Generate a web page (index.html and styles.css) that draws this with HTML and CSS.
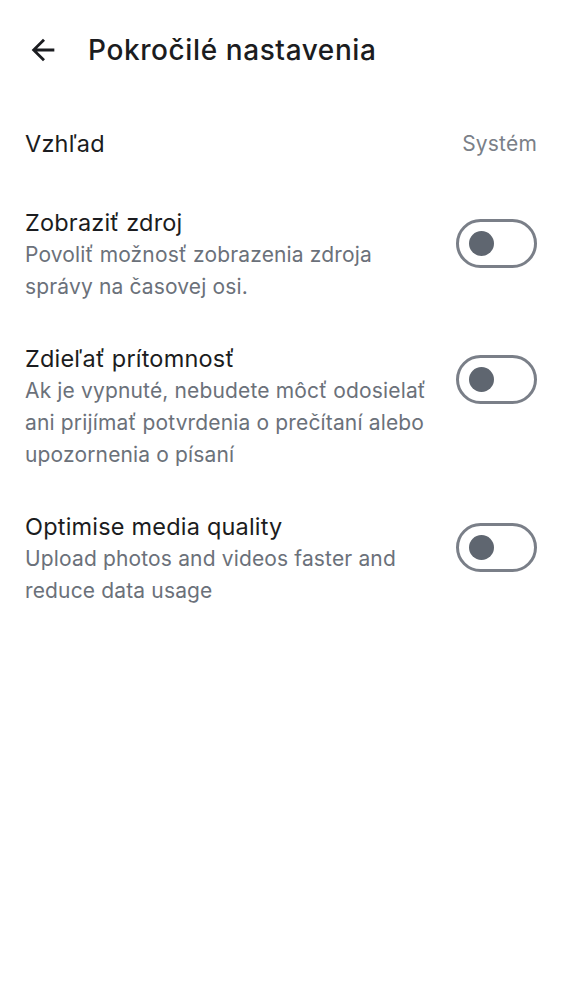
FILE: index.html
```
<!DOCTYPE html>
<html lang="sk">
<head>
<meta charset="utf-8">
<link rel="stylesheet" href="styles.css">
</head>
<body>
<div class="screen">
  <header class="appbar">
    <button class="back" aria-label="Späť">
      <svg width="34" height="34" viewBox="0 0 24 24"><path d="M20 11H7.83l5.59-5.59L12 4l-8 8 8 8 1.41-1.41L7.83 13H20v-2z" fill="#1b1c20"/></svg>
    </button>
    <h1 class="title">Pokročilé nastavenia</h1>
  </header>
  <main class="list">
    <div class="row row-simple">
      <div class="row-title">Vzhľad</div>
      <div class="row-value">Systém</div>
    </div>
    <div class="row">
      <div class="row-text">
        <div class="row-title">Zobraziť zdroj</div>
        <div class="row-sub">Povoliť možnosť zobrazenia zdroja správy na časovej osi.</div>
      </div>
      <div class="switch"><span class="knob"></span></div>
    </div>
    <div class="row">
      <div class="row-text">
        <div class="row-title">Zdieľať prítomnosť</div>
        <div class="row-sub">Ak je vypnuté, nebudete môcť odosielať ani prijímať potvrdenia o prečítaní alebo upozornenia o písaní</div>
      </div>
      <div class="switch"><span class="knob"></span></div>
    </div>
    <div class="row">
      <div class="row-text">
        <div class="row-title">Optimise media quality</div>
        <div class="row-sub">Upload photos and videos faster and reduce data usage</div>
      </div>
      <div class="switch"><span class="knob"></span></div>
    </div>
  </main>
</div>
</body>
</html>
```
FILE: styles.css
```
* { box-sizing: border-box; }
html, body { margin: 0; padding: 0; background: #fff; }
body { font-family: Inter, Roboto, sans-serif; color: #1b1c20; }
.screen { width: 562px; min-height: 1000px; }
.appbar { display: flex; align-items: center; height: 100px; padding-left: 26px; }
.back { border: 0; background: none; padding: 0; width: 34px; height: 34px; display: flex; align-items: center; justify-content: center; margin-right: 28px; }
.title { margin: 0; font-size: 28px; font-weight: 500; letter-spacing: 0.6px; color: #1b1c20; }
.list { display: flex; flex-direction: column; }
.row { display: flex; align-items: flex-start; justify-content: space-between; padding: 20px 25px; gap: 22px; }
.row-simple { height: 87px; padding-top: 0; padding-bottom: 0; align-items: center; }
.row-title { font-size: 23.5px; line-height: 32px; letter-spacing: 0.2px; color: #1b1c20; }
.row-value { font-size: 21px; letter-spacing: 0.2px; color: #7a7f88; }
.row-text { flex: 1; }
.row-sub { font-size: 21px; line-height: 32px; letter-spacing: 0.15px; color: #6b717a; }
.switch { width: 81px; height: 49px; margin-top: 12px; border: 3px solid #7a7f88; border-radius: 25px; display: flex; align-items: center; padding-left: 10px; flex-shrink: 0; }
.knob { width: 25px; height: 25px; border-radius: 50%; background: #5f6670; }
```
